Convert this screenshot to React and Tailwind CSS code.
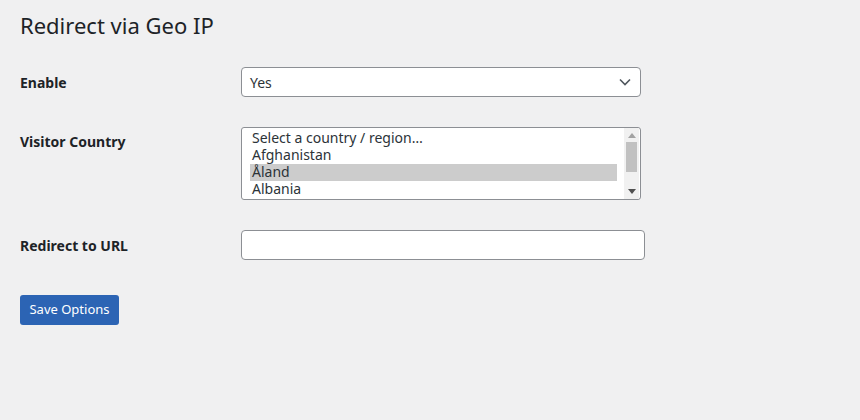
import React from 'react';

const countries = ['Select a country / region…', 'Afghanistan', 'Åland', 'Albania'];

function CountryList() {
  return (
    <div className="flex h-[73px] w-[400px] rounded-[3px] border border-[#8c8f94] bg-white">
      <div className="flex-1 pl-[8px] pr-[7px] pt-[2px]">
        {countries.map((c) => (
          <div
            key={c}
            className={`h-[17px] pl-[2px] text-[14px] leading-[15px] text-[#2c3338] ${c === 'Åland' ? 'bg-[#cccccc]' : ''}`}
          >
            {c}
          </div>
        ))}
      </div>
      <div className="mr-[1px] flex w-[15px] flex-col items-center bg-[#f1f1f1] py-[4px]">
        <svg width="8" height="5" viewBox="0 0 8 5" className="mt-[1px]">
          <polygon points="4,0 8,5 0,5" fill="#a3a3a3" />
        </svg>
        <div className="mt-[4px] h-[30px] w-[11px] bg-[#c1c1c1]" />
        <div className="flex-1" />
        <svg width="8" height="5" viewBox="0 0 8 5" className="mb-[1px]">
          <polygon points="0,0 8,0 4,5" fill="#505050" />
        </svg>
      </div>
    </div>
  );
}

export default function App() {
  return (
    <div
      className="min-h-[420px] w-[860px] bg-[#f0f0f1] pl-[20px] text-[#1d2327]"
      style={{ fontFamily: '"Noto Sans", "Open Sans", sans-serif' }}
    >
      <h1 className="pt-[10px] text-[22px] font-normal leading-[30px]">Redirect via Geo IP</h1>

      <div className="mt-[27px] flex items-center">
        <div className="w-[221px] text-[14px] font-bold">Enable</div>
        <div className="flex h-[30px] w-[400px] items-center justify-between rounded-[4px] border border-[#8c8f94] bg-white pl-[8px] pr-[9px]">
          <span className="text-[14px] text-[#2c3338]">Yes</span>
          <svg width="12" height="8" viewBox="0 0 12 8">
            <polyline points="1,1.5 6,6.5 11,1.5" fill="none" stroke="#50575e" strokeWidth="1.6" />
          </svg>
        </div>
      </div>

      <div className="mt-[30px] flex items-start">
        <div className="w-[221px] pt-[4px] text-[14px] font-bold">Visitor Country</div>
        <CountryList />
      </div>

      <div className="mt-[30px] flex items-center">
        <div className="w-[221px] text-[14px] font-bold">Redirect to URL</div>
        <input
          type="text"
          className="h-[30px] w-[404px] rounded-[4px] border border-[#8c8f94] bg-white px-[8px] text-[14px] outline-none"
        />
      </div>

      <button className="mt-[35px] h-[30px] w-[99px] rounded-[3px] bg-[#2c64b4] text-[13px] text-white">
        Save Options
      </button>
    </div>
  );
}
